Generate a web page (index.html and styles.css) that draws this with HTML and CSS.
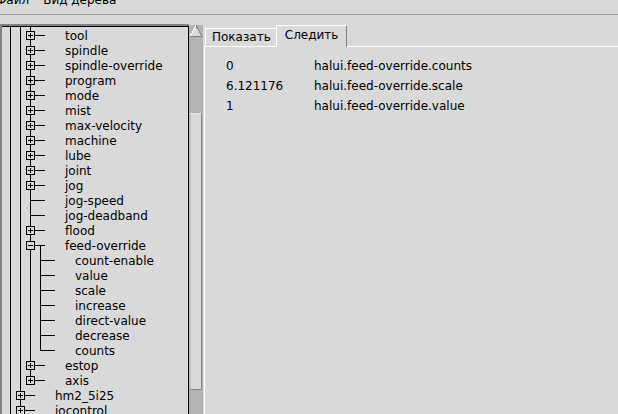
FILE: index.html
```html
<!DOCTYPE html>
<html>
<head>
<meta charset="utf-8">
<title>HAL Show</title>
<link rel="stylesheet" href="styles.css">
</head>
<body>
<div class="menubar">
  <div class="menu">
    <span class="menu-item first">Файл</span>
    <span class="menu-item">Вид дерева</span>
  </div>
</div>

<div class="main">
  <div class="tree-frame">
    <div class="tree">
      <!-- connector lines, drawn in window coordinates -->
      <svg class="lines" width="185" height="387" viewBox="2 27 185 387">
        <defs>
          <g id="plus"><rect x="-4" y="-4" width="8" height="8" fill="#d9d9d9"></rect><path d="M-2 0H2M0 -2V2"></path></g>
          <g id="minus"><rect x="-4" y="-4" width="8" height="8" fill="#d9d9d9"></rect><path d="M-2 0H2"></path></g>
        </defs>
        <g transform="translate(0.5 0.5)" stroke="#000" fill="none" stroke-linecap="square" shape-rendering="crispEdges">
          <path d="M10 27V414M20 27V414M30 27V380M40 245V350"></path>
          <path d="M30 35H44M30 50H44M30 65H44M30 80H44M30 95H44M30 110H44M30 125H44M30 140H44M30 155H44M30 170H44M30 185H44M30 200H44M30 215H44M30 230H44M30 245H44M30 365H44M30 380H44"></path>
          <path d="M40 260H54M40 275H54M40 290H54M40 305H54M40 320H54M40 335H54M40 350H54"></path>
          <path d="M20 395H34M20 410H34"></path>
          <use href="#plus" x="30" y="35"></use>
          <use href="#plus" x="30" y="50"></use>
          <use href="#plus" x="30" y="65"></use>
          <use href="#plus" x="30" y="80"></use>
          <use href="#plus" x="30" y="95"></use>
          <use href="#plus" x="30" y="110"></use>
          <use href="#plus" x="30" y="125"></use>
          <use href="#plus" x="30" y="140"></use>
          <use href="#plus" x="30" y="155"></use>
          <use href="#plus" x="30" y="170"></use>
          <use href="#plus" x="30" y="185"></use>
          <use href="#plus" x="30" y="230"></use>
          <use href="#minus" x="30" y="245"></use>
          <use href="#plus" x="30" y="365"></use>
          <use href="#plus" x="30" y="380"></use>
          <use href="#plus" x="20" y="395"></use>
          <use href="#plus" x="20" y="410"></use>
        </g>
      </svg>

      <div class="rows">
        <div class="row l2">tool</div>
        <div class="row l2">spindle</div>
        <div class="row l2">spindle-override</div>
        <div class="row l2">program</div>
        <div class="row l2">mode</div>
        <div class="row l2">mist</div>
        <div class="row l2">max-velocity</div>
        <div class="row l2">machine</div>
        <div class="row l2">lube</div>
        <div class="row l2">joint</div>
        <div class="row l2">jog</div>
        <div class="row l2">jog-speed</div>
        <div class="row l2">jog-deadband</div>
        <div class="row l2">flood</div>
        <div class="row l2">feed-override</div>
        <div class="row l3">count-enable</div>
        <div class="row l3">value</div>
        <div class="row l3">scale</div>
        <div class="row l3">increase</div>
        <div class="row l3">direct-value</div>
        <div class="row l3">decrease</div>
        <div class="row l3">counts</div>
        <div class="row l2">estop</div>
        <div class="row l2">axis</div>
        <div class="row l1">hm2_5i25</div>
        <div class="row l1">iocontrol</div>
      </div>
    </div>
  </div>

  <div class="scrollbar">
    <div class="arrow">
      <svg width="14" height="12" viewBox="0 0 14 12" shape-rendering="crispEdges">
        <polygon points="1,11.5 7,0.5 13,11.5" fill="#d9d9d9"></polygon>
        <path d="M1 11.5L7 0.5" stroke="#fff" fill="none"></path>
        <path d="M7 0.5L13 11.5H1" stroke="#828282" fill="none"></path>
      </svg>
    </div>
    <div class="trough">
      <div class="slider"></div>
    </div>
  </div>

  <div class="notebook">
    <div class="tabs">
      <div class="tab">Показать</div>
      <div class="tab selected">Следить</div>
    </div>
    <div class="pane">
      <div class="watch">
        <div>0</div><div>halui.feed-override.counts</div>
        <div>6.121176</div><div>halui.feed-override.scale</div>
        <div>1</div><div>halui.feed-override.value</div>
      </div>
    </div>
  </div>
</div>
</body>
</html>
```

FILE: styles.css
```css
html,body{
  margin:0;
  padding:0;
  width:618px;
  height:414px;
  overflow:hidden;
}
body{
  background:#d9d9d9;
  color:#000;
  font-family:"DejaVu Sans",sans-serif;
  font-size:12px;
}
.menubar{
  height:14px;
  border-bottom:1px solid #a0a0a0;
  overflow:hidden;
}
.menu{
  display:flex;
  gap:14px;
  margin-top:-7px;
  line-height:15px;
}
.menu-item.first{
  margin-left:-4px;
}
.main{
  display:flex;
  height:390px;
  padding-top:9px;
}
.tree-frame{
  width:187px;
  border-top:2px solid #828282;
  border-left:2px solid #828282;
}
.tree{
  position:relative;
  width:186px;
  height:100%;
  border-top:1px solid #000;
  border-right:1px solid #000;
  overflow:hidden;
}
.lines{
  position:absolute;
  top:0;
  left:0;
}
.rows{
  position:relative;
  padding-top:2px;
}
.row{
  height:15px;
  line-height:15px;
  white-space:nowrap;
}
.l1{padding-left:53px;}
.l2{padding-left:63px;}
.l3{padding-left:73px;}
.scrollbar{
  width:14px;
  margin-top:1px;
  display:flex;
  flex-direction:column;
  background:#b3b3b3;
}
.arrow{
  height:12px;
}
.arrow svg{
  display:block;
}
.trough{
  flex:1;
  padding:0 1px;
}
.slider{
  margin-top:76px;
  height:275px;
  background:#d9d9d9;
  border-top:1px solid #ececec;
  border-left:1px solid #c4c4c4;
  border-right:1px solid #828282;
  border-bottom:1px solid #828282;
}
.notebook{
  flex:1;
  margin-left:1px;
  display:flex;
  flex-direction:column;
}
.tabs{
  display:flex;
  align-items:flex-end;
  padding-left:1px;
  margin-top:1px;
}
.tab{
  position:relative;
  background:#d9d9d9;
  border-top:1px solid #fff;
  border-left:1px solid #fff;
  border-right:1px solid #828282;
  line-height:15px;
  padding:1px 6px 1px 6px;
  white-space:nowrap;
}
.tab.selected{
  z-index:1;
  margin-left:-2px;
  margin-bottom:-1px;
  padding:2px 8px 4px 8px;
}
.pane{
  flex:1;
  border-top:1px solid #fff;
  border-left:1px solid #fff;
  padding:9px 0 0 21px;
}
.watch{
  display:grid;
  grid-template-columns:88px auto;
  line-height:20px;
}
```
